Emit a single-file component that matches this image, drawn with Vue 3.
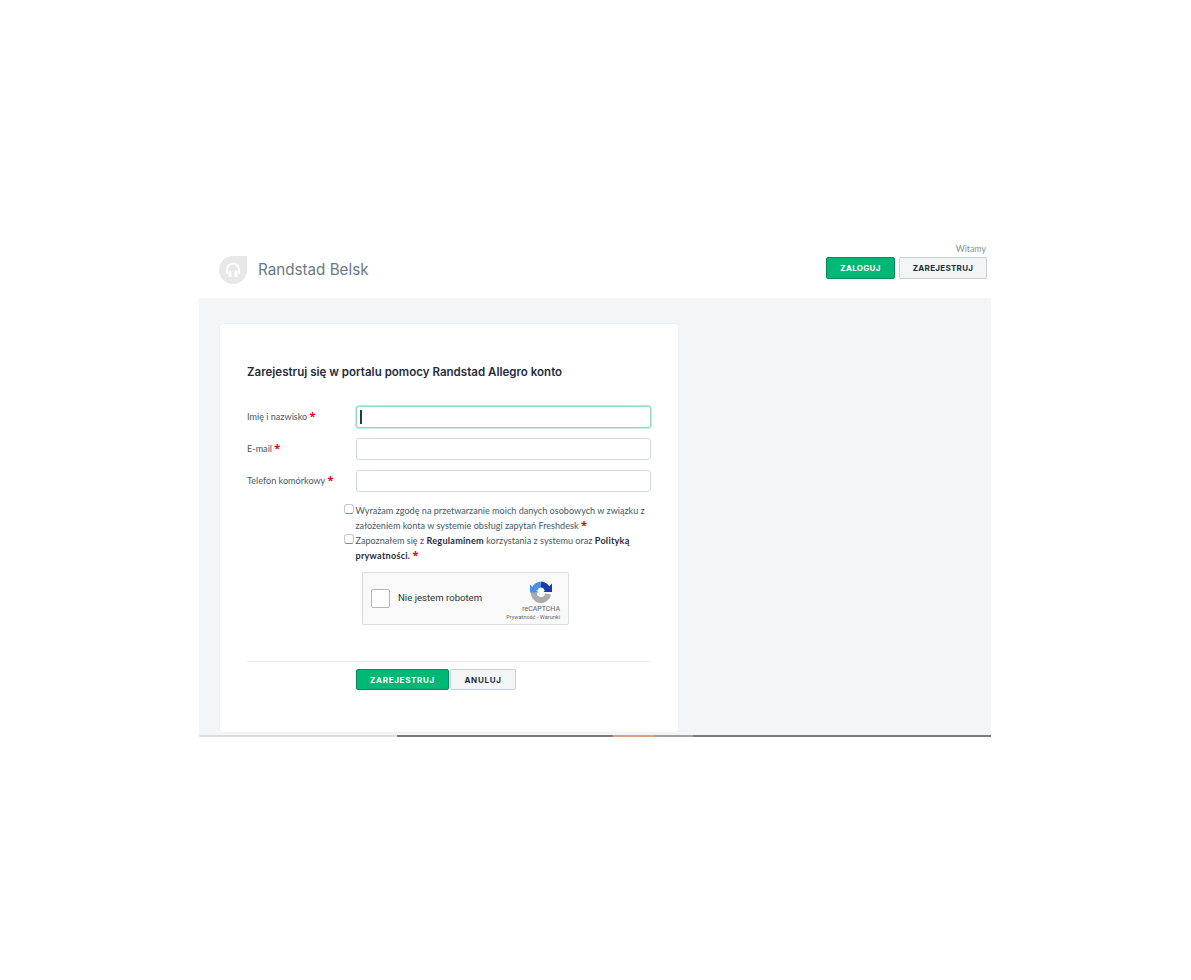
<template>
  <div class="page">
    <div class="shell">
      <header class="top">
        <div class="brand">
          <svg class="logo" width="28" height="28" viewBox="0 0 28 28">
            <path d="M14 0H28V14A14 14 0 1 1 14 0Z" fill="#e8e8e8" />
            <path d="M8 18V13.5a6 6 0 0 1 12 0V18" fill="none" stroke="#fff" stroke-width="1.8" />
            <rect x="9.5" y="14.5" width="3" height="6.5" rx="1" fill="#fff" />
            <rect x="15.5" y="14.5" width="3" height="6.5" rx="1" fill="#fff" />
          </svg>
          <span class="brand-name">Randstad Belsk</span>
        </div>
        <div class="auth">
          <span class="welcome">Witamy</span>
          <div class="auth-btns">
            <button class="btn primary login">ZALOGUJ</button>
            <button class="btn plain signup">ZAREJESTRUJ</button>
          </div>
        </div>
      </header>

      <main class="body">
        <section class="card">
          <h1>Zarejestruj się w portalu pomocy Randstad Allegro konto</h1>

          <div class="field" v-for="f in fields" :key="f.label">
            <label>{{ f.label }} <b class="req">*</b></label>
            <div class="input" :class="{ focused: f.focused }">
              <i v-if="f.focused" class="caret"></i>
            </div>
          </div>

          <div class="check first">
            <span class="box"></span>
            <p>Wyrażam zgodę na przetwarzanie moich danych osobowych w związku z założeniem konta w systemie obsługi zapytań Freshdesk <b class="req">*</b></p>
          </div>
          <div class="check">
            <span class="box"></span>
            <p>Zapoznałem się z <strong>Regulaminem</strong> korzystania z systemu oraz <strong>Polityką prywatności.</strong> <b class="req">*</b></p>
          </div>

          <div class="captcha">
            <span class="cap-box"></span>
            <span class="cap-text">Nie jestem robotem</span>
            <div class="cap-logo">
              <svg class="cap-icon" width="22" height="23" viewBox="0 0 22 23">
                <path d="M4 12A7 7 0 0 0 18 14" fill="none" stroke="#ababab" stroke-width="6" />
                <path d="M4.5 10A7 7 0 0 1 11 4.5" fill="none" stroke="#4a90e8" stroke-width="6" />
                <path d="M0 4.5L0 12.5H8.5Z" fill="#4a90e8" />
                <path d="M11 4.5A7 7 0 0 1 17.5 10" fill="none" stroke="#1c3aa9" stroke-width="6" />
                <path d="M22 3.5V12H13.5Z" fill="#1c3aa9" />
              </svg>
              <span class="cap-brand">reCAPTCHA</span>
              <span class="cap-links">Prywatność - Warunki</span>
            </div>
          </div>

          <div class="actions">
            <button class="btn primary submit">ZAREJESTRUJ</button>
            <button class="btn plain cancel">ANULUJ</button>
          </div>
        </section>
      </main>

      <div class="strip">
        <i class="s1"></i><i class="s2"></i><i class="s3"></i><i class="s4"></i><i class="s5"></i>
      </div>
    </div>
  </div>
</template>

<script setup>
const fields = [
  { label: "Imię i nazwisko", focused: true },
  { label: "E-mail", focused: false },
  { label: "Telefon komórkowy", focused: false },
];
</script>

<style scoped>
.page {
  height: 980px;
  background: #fff;
  padding: 240px 200px 0 199px;
  box-sizing: border-box;
  font-family: Lato, "Open Sans", sans-serif;
  color: #475867;
}
.shell {
  width: 792px;
}
.top {
  height: 58px;
  display: flex;
  justify-content: space-between;
  padding: 0 4px 0 20px;
}
.brand {
  display: flex;
  align-items: center;
  gap: 11px;
  padding-top: 2px;
}
.logo {
  display: block;
}
.brand-name {
  font-family: Inter, sans-serif;
  font-size: 15.2px;
  line-height: 18px;
  margin-top: -1px;
  color: #6b7a86;
}
.auth {
  display: flex;
  flex-direction: column;
  align-items: flex-end;
}
.welcome {
  font-size: 8.8px;
  line-height: 17px;
  margin-right: 1px;
  color: #84919b;
}
.auth-btns {
  display: flex;
  gap: 4px;
}
.btn {
  height: 22px;
  padding: 0;
  box-sizing: border-box;
  border-radius: 2px;
  font-family: Inter, sans-serif;
  font-size: 8px;
  font-weight: 700;
  letter-spacing: 0.3px;
}
.primary {
  background: #00b875;
  border: 1px solid #078a5b;
  color: #fff;
}
.plain {
  background: #f3f5f7;
  border: 1px solid #c5d0db;
  color: #1c2b3a;
}
.login {
  width: 69px;
}
.signup {
  width: 88px;
}
.body {
  height: 437px;
  background: #f3f5f7;
  padding: 25px 0 0 20px;
  box-sizing: border-box;
}
.card {
  width: 460px;
  height: 410px;
  box-sizing: border-box;
  background: #fff;
  border: 1px solid #eef1f4;
  border-radius: 4px;
  padding: 40px 27px 0;
}
h1 {
  margin: 0 0 26px;
  font-family: Inter, sans-serif;
  font-size: 11.5px;
  line-height: 16px;
  font-weight: 600;
  letter-spacing: 0.02px;
  color: #1f2d3d;
}
.field {
  display: flex;
  align-items: center;
  margin-bottom: 10px;
}
.field label {
  width: 109px;
  font-size: 9.1px;
  line-height: 20px;
  margin-top: -1px;
  color: #475867;
}
.req {
  font-family: "Open Sans", sans-serif;
  color: #e3000f;
  font-size: 11px;
  font-weight: 700;
  line-height: 0;
}
.input {
  width: 295px;
  height: 22px;
  box-sizing: border-box;
  border: 1px solid #d4d9de;
  border-radius: 3px;
  background: #fff;
  display: flex;
  align-items: center;
}
.input.focused {
  border-color: #8fdcbd;
  box-shadow: 0 0 0 1px #bfeedb;
}
.caret {
  width: 1.5px;
  height: 14px;
  margin-left: 3px;
  background: #1f3d4d;
}
.check {
  display: flex;
  margin-left: 97px;
  gap: 1.5px;
}
.check.first {
  margin-top: 11px;
}
.box {
  width: 10px;
  height: 10px;
  margin-top: 1px;
  flex: none;
  box-sizing: border-box;
  border: 1px solid #c4cbd2;
  border-bottom-color: #7d8790;
  border-radius: 3px;
  background: #fff;
}
.check p {
  margin: 0;
  font-size: 9.1px;
  line-height: 15px;
  color: #475867;
}
.check strong {
  color: #1f2d3d;
  font-weight: 700;
  letter-spacing: 0.25px;
}
.captcha {
  width: 207px;
  height: 53px;
  margin: 9px 0 0 115px;
  box-sizing: border-box;
  background: #f9f9f9;
  border: 1px solid #dcdcdc;
  border-radius: 2px;
  display: flex;
  align-items: center;
  padding: 0 8px 0 8px;
  font-family: Roboto, sans-serif;
}
.cap-box {
  width: 19px;
  height: 19px;
  margin-top: -1px;
  box-sizing: border-box;
  background: #fff;
  border: 1px solid #b5b5b5;
  border-radius: 2px;
}
.cap-text {
  margin: -2px 0 0 8px;
  font-size: 9.6px;
  color: #333;
}
.cap-logo {
  margin-left: auto;
  margin-top: 4px;
  display: flex;
  flex-direction: column;
  align-items: flex-end;
  color: #666;
}
.cap-icon {
  margin: -1px 8px 0 0;
}
.cap-brand {
  font-size: 7px;
  line-height: 9px;
  margin-top: 2px;
}
.cap-links {
  font-size: 5.6px;
  line-height: 7px;
}
.actions {
  margin-top: 36px;
  padding: 7px 0 0 109px;
  border-top: 1px solid #eceef0;
  display: flex;
  gap: 1px;
}
.submit {
  width: 93px;
  height: 21px;
  letter-spacing: 0.7px;
}
.cancel {
  width: 66px;
  height: 21px;
  letter-spacing: 0.7px;
}
.strip {
  display: flex;
  height: 2px;
}
.strip i {
  display: block;
  height: 2px;
}
.s1 {
  width: 198px;
  background: #dcdedd;
}
.s2 {
  width: 216px;
  background: #7c7c7c;
}
.s3 {
  width: 41px;
  background: #d9a37a;
}
.s4 {
  width: 39px;
  background: #a0a0a0;
}
.s5 {
  width: 298px;
  background: #7c7c7c;
}
</style>
